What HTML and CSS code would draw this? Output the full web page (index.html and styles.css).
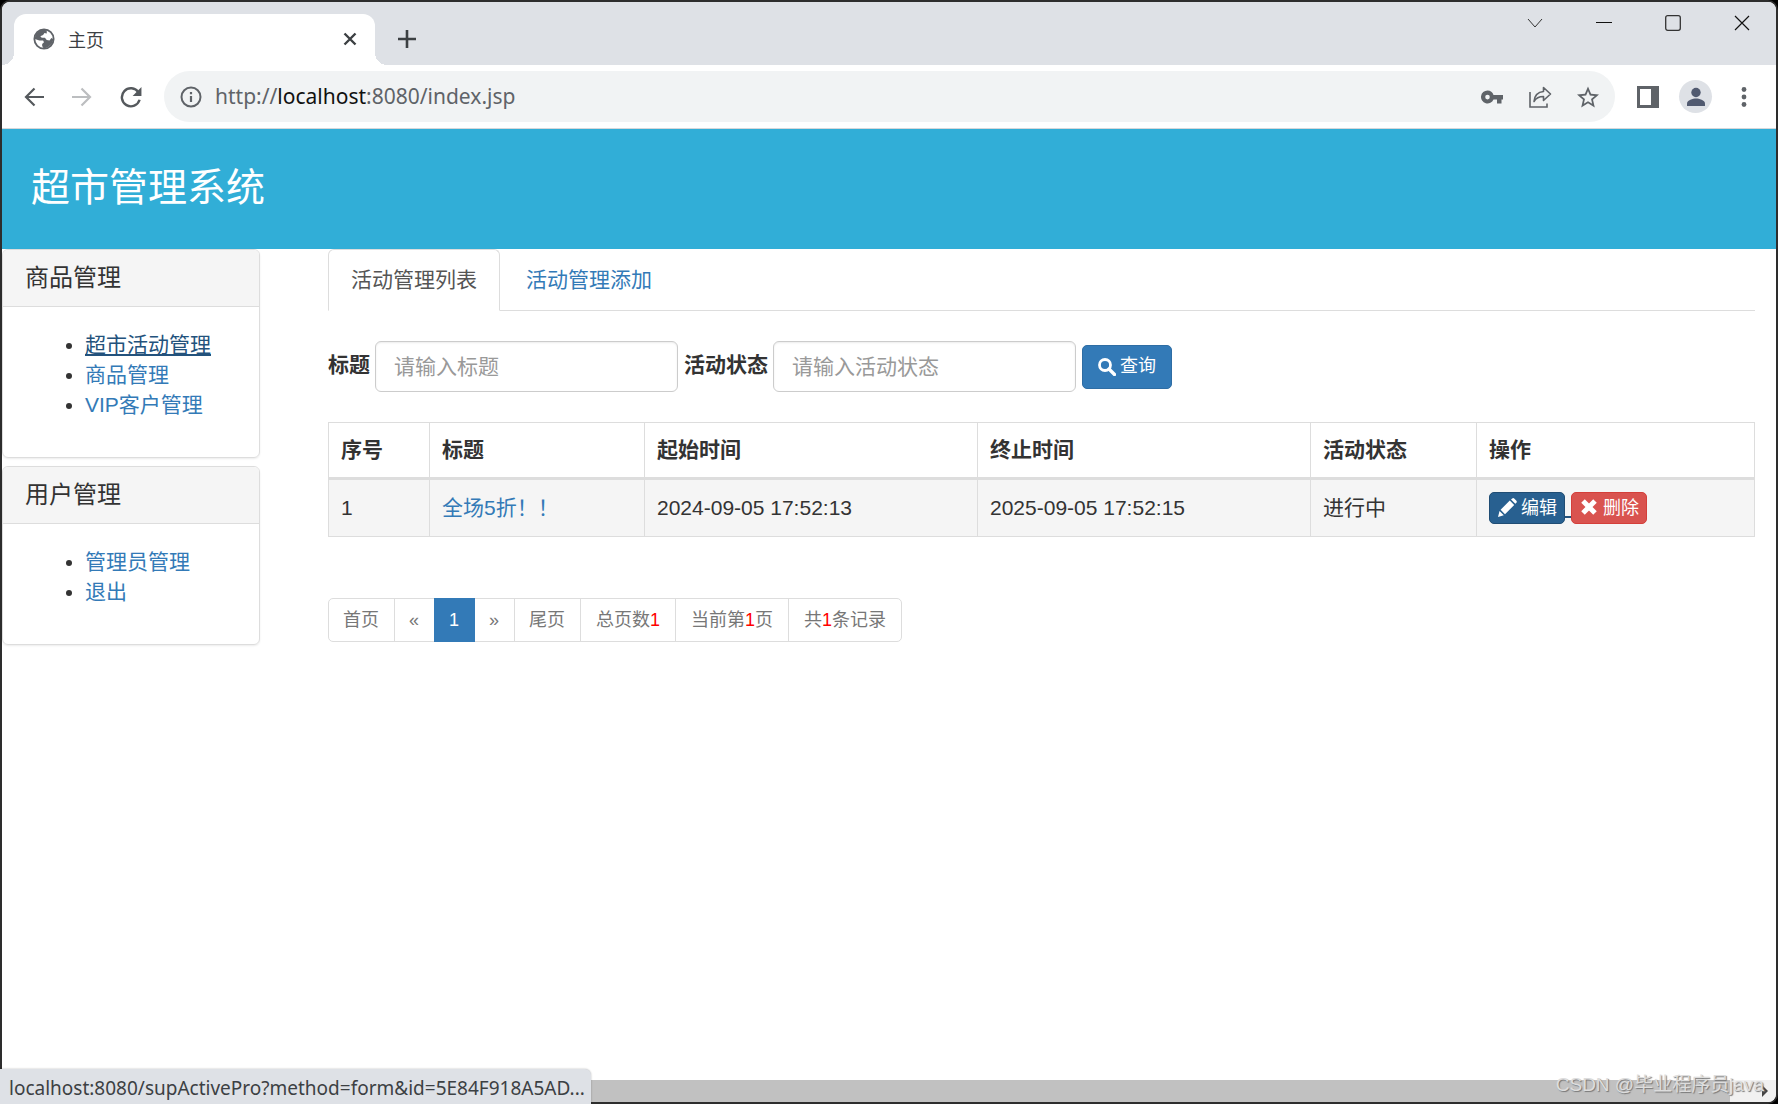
FILE: index.html
```html
<!DOCTYPE html>
<html lang="zh-CN">
<head>
<meta charset="utf-8">
<title>主页</title>
<link rel="stylesheet" href="styles.css">
</head>
<body>
<div class="window">
  <div class="tabstrip">
    <div class="browser-tab">
      <svg class="favicon" viewBox="0 0 24 24" width="22" height="22"><circle cx="12" cy="12" r="10.500" fill="#fff" stroke="#5f6368" stroke-width="2"/><path fill="#5f6368" d="M11 2C6 2.500 2 7 2 12l5 1.500h4l1 2-2 2v2l1.500 2.500C17 22 22 17 22 12l-2-1-2 2.500-3-.5-2-2.500H9.500L8 9l3-1.500 1.500-2L15 6V2.500z"/></svg>
      <span class="tab-title">主页</span>
      <button class="icon-button" aria-label="关闭标签页"><svg viewBox="0 0 14 14" width="14" height="14"><path d="M1.500 1.500l11 11M12.500 1.500l-11 11" stroke="#3c4043" stroke-width="2.400"/></svg></button>
    </div>
    <button class="icon-button new-tab" aria-label="新标签页"><svg viewBox="0 0 18 18" width="18" height="18"><path d="M9 0v18M0 9h18" stroke="#3c4043" stroke-width="2.600"/></svg></button>
    <div class="window-controls">
      <button class="icon-button" aria-label="搜索标签页"><svg viewBox="0 0 16 16" width="16" height="16"><path d="M1 4l7 8 7-8" fill="none" stroke="#333"/></svg></button>
      <button class="icon-button" aria-label="最小化"><svg viewBox="0 0 16 16" width="16" height="16"><path d="M0 7.500h16" stroke="#111"/></svg></button>
      <button class="icon-button" aria-label="最大化"><svg viewBox="0 0 16 16" width="16" height="16"><rect x=".7" y=".7" width="14.600" height="14.600" rx="2" fill="none" stroke="#333" stroke-width="1.300"/></svg></button>
      <button class="icon-button" aria-label="关闭"><svg viewBox="0 0 16 16" width="16" height="16"><path d="M1 1l14 14M15 1L1 15" stroke="#111" stroke-width="1.200"/></svg></button>
    </div>
  </div>

  <div class="toolbar">
    <div class="nav-buttons">
      <button class="icon-button" aria-label="后退"><svg viewBox="0 0 20 20" width="20" height="20"><path d="M20 10H2M10.500 1.500L2 10l8.500 8.500" fill="none" stroke="#55595d" stroke-width="2.200"/></svg></button>
      <button class="icon-button" aria-label="前进"><svg viewBox="0 0 20 20" width="20" height="20"><path d="M0 10h18M9.500 1.500L18 10l-8.500 8.500" fill="none" stroke="#bcbec0" stroke-width="2.200"/></svg></button>
      <button class="icon-button" aria-label="重新加载"><svg viewBox="0 0 20 20" width="22" height="22"><path d="M16.800 5.800A8.200 8.200 0 1 0 17.800 12.500" fill="none" stroke="#55595d" stroke-width="2.200"/><path d="M19.500 1v8h-8z" fill="#55595d"/></svg></button>
    </div>
    <div class="omnibox">
      <svg class="info" viewBox="0 0 22 22" width="22" height="22"><circle cx="11" cy="11" r="9.500" fill="none" stroke="#5f6368" stroke-width="2"/><path d="M11 10v6M11 6v2.300" stroke="#5f6368" stroke-width="2.200"/></svg>
      <span class="url">http://<b>localhost</b>:8080/index.jsp</span>
      <button class="icon-button" aria-label="密码"><svg viewBox="0 0 22 14" width="22" height="14"><path fill="#5f6368" fill-rule="evenodd" d="M6.500.5a6.500 6.500 0 1 0 6 9H16v4h4.500v-4H22V5H12.500a6.500 6.500 0 0 0-6-4.500zm0 4.300a2.300 2.300 0 1 1 0 4.600 2.300 2.300 0 0 1 0-4.600z"/></svg></button>
      <button class="icon-button" aria-label="分享"><svg viewBox="0 0 24 22" width="24" height="22"><path d="M2 6v15h17v-3.500" fill="none" stroke="#5f6368" stroke-width="1.600"/><path d="M15.500 1.500L22.500 8l-7 6.500v-4C11 10.500 8 12 6 15.500 6.500 10 10 6 15.500 5.500z" fill="none" stroke="#5f6368" stroke-width="1.600" stroke-linejoin="round"/></svg></button>
      <button class="icon-button" aria-label="收藏"><svg viewBox="2 1.500 20 20" width="22" height="22"><path fill="#5f6368" d="M22 9.240l-7.190-.62L12 2 9.190 8.630 2 9.240l5.460 4.730L5.820 21 12 17.270 18.180 21l-1.630-7.030L22 9.240zM12 15.400l-3.760 2.270 1-4.280-3.320-2.880 4.380-.38L12 6.100l1.710 4.040 4.380.38-3.320 2.880 1 4.280L12 15.400z"/></svg></button>
    </div>
    <div class="tool-buttons">
      <button class="icon-button" aria-label="侧边栏"><svg viewBox="0 0 22 22" width="22" height="22"><path fill="#5f6368" fill-rule="evenodd" d="M0 0h22v22H0zM3 3v16h11V3z"/></svg></button>
      <button class="icon-button avatar" aria-label="个人资料"><svg viewBox="0 0 20 20" width="20" height="20"><circle cx="10" cy="5.500" r="4.700" fill="#515a70"/><path fill="#515a70" d="M1 19v-2.500C1 13 7 11.500 10 11.500s9 1.500 9 5V19z"/></svg></button>
      <button class="icon-button" aria-label="菜单"><svg viewBox="0 0 6 20" width="6" height="20"><g fill="#5f6368"><circle cx="3" cy="2.500" r="2.400"/><circle cx="3" cy="10" r="2.400"/><circle cx="3" cy="17.500" r="2.400"/></g></svg></button>
    </div>
  </div>

  <header class="banner"><h1>超市管理系统</h1></header>

  <div class="layout">
    <nav class="sidebar">
      <section class="panel">
        <h2>商品管理</h2>
        <ul>
          <li><a class="current" href="#">超市活动管理</a></li>
          <li><a href="#">商品管理</a></li>
          <li><a href="#">VIP客户管理</a></li>
        </ul>
      </section>
      <section class="panel">
        <h2>用户管理</h2>
        <ul>
          <li><a href="#">管理员管理</a></li>
          <li><a href="#">退出</a></li>
        </ul>
      </section>
    </nav>

    <main class="content">
      <div class="tabs">
        <a class="active" href="#">活动管理列表</a>
        <a href="#">活动管理添加</a>
      </div>

      <form class="search">
        <label for="title">标题</label>
        <input id="title" type="text" placeholder="请输入标题">
        <label for="state">活动状态</label>
        <input id="state" type="text" placeholder="请输入活动状态">
        <button class="btn primary" type="button"><svg viewBox="0 0 18 18" width="18" height="18"><circle cx="7" cy="7" r="5.500" fill="none" stroke="#fff" stroke-width="2.800"/><path d="M11 11l5.500 5.500" stroke="#fff" stroke-width="3.400" stroke-linecap="round"/></svg>查询</button>
      </form>

      <table class="grid">
        <colgroup><col class="c-no"><col class="c-title"><col class="c-time"><col class="c-time"><col class="c-state"><col></colgroup>
        <thead>
          <tr><th>序号</th><th>标题</th><th>起始时间</th><th>终止时间</th><th>活动状态</th><th>操作</th></tr>
        </thead>
        <tbody>
          <tr>
            <td>1</td>
            <td><a href="#">全场5折！！</a></td>
            <td>2024-09-05 17:52:13</td>
            <td>2025-09-05 17:52:15</td>
            <td>进行中</td>
            <td>
              <div class="actions">
                <button class="btn small edit" type="button"><svg viewBox="0 0 20 20" width="20" height="20"><path fill="#fff" d="M1 19l1.500-6L6.800 17.300zM3.600 11.800L12.800 2.600l4.400 4.400L8 16.200zM14 1.500L15.200.5q1-.8 2 0l2.200 2.200q.8 1 0 2L18.300 5.800z"/></svg>编辑</button><span class="joint"></span><button class="btn small danger" type="button"><svg viewBox="0 0 20 20" width="20" height="20"><path d="M4 3l12 12M16 3L4 15" stroke="#fff" stroke-width="5"/></svg>删除</button>
              </div>
            </td>
          </tr>
        </tbody>
      </table>

      <div class="pagination">
        <a href="#">首页</a><a href="#">«</a><a class="active" href="#">1</a><a href="#">»</a><a href="#">尾页</a><span>总页数<em>1</em></span><span>当前第<em>1</em>页</span><span>共<em>1</em>条记录</span>
      </div>
    </main>
  </div>

  <div class="scrollbar"><div class="thumb"></div><svg viewBox="0 0 6 12" width="6" height="12"><path d="M0 0l6 6-6 6z" fill="#444"/></svg></div>
  <div class="status">localhost:8080/supActivePro?method=form&amp;id=5E84F918A5AD...</div>
  <div class="watermark">CSDN @毕业程序员java</div>
</div>
</body>
</html>
```
FILE: styles.css
```css
* { box-sizing: border-box; }

body {
  margin: 0;
  background: #000;
  color: #333;
  font: 21px/30px "Liberation Sans", Arial, "Noto Sans CJK SC", sans-serif;
}

h1, h2, ul { margin: 0; font-weight: 400; }
a { color: #337ab7; text-decoration: none; }
button, input { font-family: inherit; }
svg { display: block; flex: none; }

.window {
  position: relative;
  display: flex;
  flex-direction: column;
  min-height: 100vh;
  border: 2px solid #2d2d2d;
  border-radius: 10px 10px 10px 0;
  background: #fff;
}

.icon-button {
  display: flex;
  align-items: center;
  justify-content: center;
  padding: 0;
  border: 0;
  background: none;
}

/* Browser frame */
.tabstrip {
  display: flex;
  height: 63px;
  border-radius: 8px 8px 0 0;
  background: #dee1e6;
}
.browser-tab {
  position: relative;
  display: flex;
  align-items: center;
  width: 361px;
  margin: 12px 0 0 12px;
  padding: 0 18px 2px 19px;
  border-radius: 12px 12px 0 0;
  background: #fff;
}
.browser-tab::before,
.browser-tab::after {
  content: "";
  position: absolute;
  bottom: 0;
  width: 12px;
  height: 12px;
}
.browser-tab::before {
  right: 100%;
  background: radial-gradient(circle at 0 0, #dee1e6 12px, #fff 12px);
}
.browser-tab::after {
  left: 100%;
  background: radial-gradient(circle at 100% 0, #dee1e6 12px, #fff 12px);
}
.tab-title {
  flex: 1;
  margin-left: 13px;
  color: #3c4043;
  font: 18px/24px "Noto Sans CJK SC", sans-serif;
}
.new-tab { margin: 12px 0 2px 23px; }
.window-controls {
  display: flex;
  gap: 53px;
  height: 42px;
  margin-left: auto;
  padding-right: 26px;
}

.toolbar {
  display: flex;
  align-items: center;
  height: 64px;
  padding: 0 29px 0 22px;
  border-bottom: 1px solid #d5d7da;
}
.nav-buttons { display: flex; gap: 28px; }
.omnibox {
  display: flex;
  flex: 1;
  align-items: center;
  height: 51px;
  margin-left: 22px;
  padding: 0 16px;
  gap: 25px;
  border-radius: 26px;
  background: #f1f3f4;
}
.url {
  flex: 1;
  margin-left: -12px;
  padding-bottom: 2px;
  color: #5f6368;
  font: 21px/30px "Noto Sans", sans-serif;
}
.url b { color: #111; font-weight: 400; }
.tool-buttons {
  display: flex;
  align-items: center;
  gap: 20px;
  margin-left: 22px;
}
.avatar {
  width: 33px;
  height: 33px;
  border-radius: 50%;
  background: #dee1e6;
}
.avatar + .icon-button { margin-left: 9px; }

/* Page */
.banner {
  height: 120px;
  padding: 37px 29px;
  background: #31aed7;
  color: #fff;
}
.banner h1 { font-size: 39px; line-height: 43px; }

.layout {
  display: flex;
  flex: 1;
  gap: 68px;
  padding-right: 21px;
}
.sidebar { width: 258px; }
.panel {
  margin-bottom: 8px;
  border: 1px solid #ddd;
  border-radius: 6px;
  box-shadow: 0 1px 2px rgba(0, 0, 0, .08);
}
.panel h2 {
  padding: 15px 22px;
  border-bottom: 1px solid #ddd;
  border-radius: 5px 5px 0 0;
  background: #f5f5f5;
  font-size: 24px;
  line-height: 26px;
}
.panel ul { padding: 23px 22px 37px 82px; }
.current { color: #23527c; text-decoration: underline; }

.content { flex: 1; min-width: 0; }
.tabs {
  display: flex;
  gap: 3px;
  border-bottom: 1px solid #ddd;
}
.tabs a {
  margin-bottom: -1px;
  padding: 15px 22px;
  border: 1px solid transparent;
  border-radius: 6px 6px 0 0;
}
.tabs .active {
  border-color: #ddd #ddd #fff;
  background: #fff;
  color: #555;
}

.search {
  display: flex;
  align-items: center;
  gap: 6px;
  margin: 30px 0;
}
.search label { padding-bottom: 4px; margin-right: -1px; font-weight: 700; }
.search input {
  width: 303px;
  height: 51px;
  padding: 0 18px;
  border: 1px solid #ccc;
  border-radius: 6px;
  background: #fff;
  box-shadow: inset 0 1px 2px rgba(0, 0, 0, .08);
  color: #555;
  font-size: 21px;
}
.search input::placeholder { color: #999; opacity: 1; }

.btn {
  display: flex;
  align-items: center;
  gap: 4px;
  border: 1px solid;
  border-radius: 5px;
  color: #fff;
  font-size: 18px;
  line-height: 27px;
}
.primary {
  height: 44px;
  padding: 0 15px;
  border-color: #2e6da4;
  background: #337ab7;
}
.small { height: 32px; padding: 0 7px; }
.edit { background: #286090; border-color: #204d74; }
.danger { background: #d9534f; border-color: #d43f3a; }

.grid {
  width: 100%;
  border-collapse: collapse;
  table-layout: fixed;
}
.grid th, .grid td {
  padding: 12px;
  border: 1px solid #ddd;
  text-align: left;
}
.grid th { border-bottom-width: 3px; }
.grid tbody { background: #f5f5f5; }
.c-no { width: 101px; }
.c-title { width: 215px; }
.c-time { width: 333px; }
.c-state { width: 166px; }
.actions { display: flex; align-items: flex-end; }
.joint {
  width: 6px;
  height: 2px;
  margin-bottom: 6px;
  background: #23527c;
}

.pagination {
  display: flex;
  margin-top: 61px;
  font-size: 18px;
  line-height: 26px;
}
.pagination > * {
  margin-right: -1px;
  padding: 8px 15px;
  border: 1px solid #ddd;
  color: #777;
}
.pagination a { padding-left: 14px; }
.pagination > :first-child { border-radius: 5px 0 0 5px; }
.pagination > :last-child { border-radius: 0 5px 5px 0; }
.pagination .active {
  z-index: 1;
  border-color: #337ab7;
  background: #337ab7;
  color: #fff;
}
.pagination em { color: #f00; font-style: normal; }

/* Bottom edge */
.scrollbar {
  display: flex;
  align-items: center;
  height: 22px;
  padding-right: 8px;
  border-radius: 0 0 8px 0;
  background: #f1f1f1;
}
.thumb {
  flex: 1;
  height: 22px;
  margin-right: 32px;
  background: #c1c1c1;
}
.status {
  position: absolute;
  left: -2px;
  bottom: -2px;
  width: 591px;
  height: 35px;
  padding-left: 9px;
  border-radius: 0 6px 0 0;
  background: #dee1e6;
  box-shadow: 0 0 2px rgba(0, 0, 0, .3);
  color: #3c4043;
  font: 19px/38px "Noto Sans", sans-serif;
  white-space: nowrap;
}
.watermark {
  position: absolute;
  right: 12px;
  bottom: 2px;
  color: #ddd;
  font-size: 19px;
  text-shadow: 1px 1px 1px #777;
}
```
